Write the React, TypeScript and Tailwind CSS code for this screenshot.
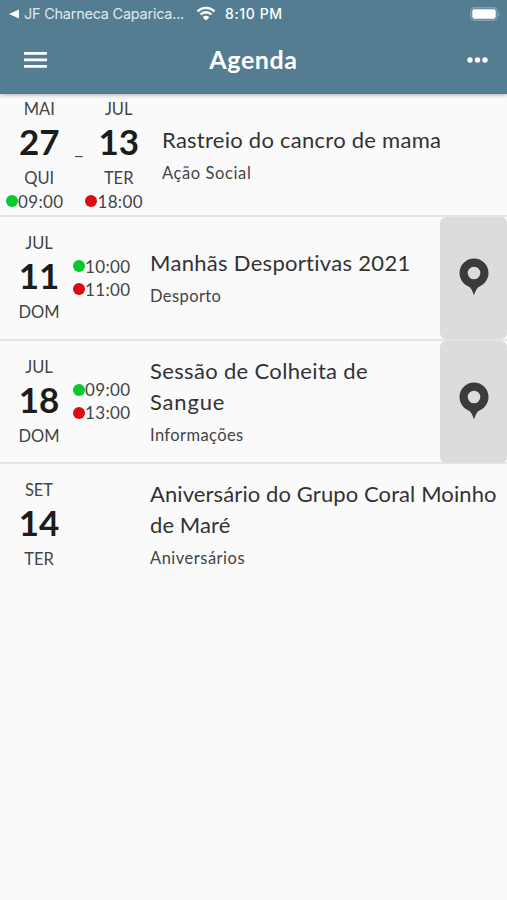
import React from 'react';
import clsx from 'clsx';

interface DateInfo {
  month: string;
  day: string;
  weekday: string;
  time?: string;
}

interface AgendaEvent {
  id: number;
  start: DateInfo;
  end?: DateInfo;
  hours?: { from: string; to: string };
  title: { text: string; tracking: string }[];
  category: string;
  categoryTracking: string;
  hasLocation?: boolean;
}

const events: AgendaEvent[] = [
  {
    id: 1,
    start: { month: 'MAI', day: '27', weekday: 'QUI', time: '09:00' },
    end: { month: 'JUL', day: '13', weekday: 'TER', time: '18:00' },
    title: [{ text: 'Rastreio do cancro de mama', tracking: 'tracking-[0.26px]' }],
    category: 'Ação Social',
    categoryTracking: 'tracking-[0.6px]',
  },
  {
    id: 2,
    start: { month: 'JUL', day: '11', weekday: 'DOM' },
    hours: { from: '10:00', to: '11:00' },
    title: [{ text: 'Manhãs Desportivas 2021', tracking: 'tracking-[0.3px]' }],
    category: 'Desporto',
    categoryTracking: 'tracking-[0.4px]',
    hasLocation: true,
  },
  {
    id: 3,
    start: { month: 'JUL', day: '18', weekday: 'DOM' },
    hours: { from: '09:00', to: '13:00' },
    title: [
      { text: 'Sessão de Colheita de', tracking: 'tracking-[0.34px]' },
      { text: 'Sangue', tracking: 'tracking-[0.8px]' },
    ],
    category: 'Informações',
    categoryTracking: 'tracking-[0.4px]',
    hasLocation: true,
  },
  {
    id: 4,
    start: { month: 'SET', day: '14', weekday: 'TER' },
    title: [
      { text: 'Aniversário do Grupo Coral Moinho', tracking: 'tracking-[0.1px]' },
      { text: 'de Maré', tracking: 'tracking-[0.1px]' },
    ],
    category: 'Aniversários',
    categoryTracking: 'tracking-[0.5px]',
  },
];

const Time: React.FC<{ value: string; color: 'green' | 'red' }> = ({ value, color }) => (
  <div className="flex h-[23px] items-center">
    <span className={clsx('h-3 w-3 rounded-full', color === 'green' ? 'bg-[#05c92f]' : 'bg-[#dc0a12]')} />
    <span className="text-[17px] leading-[23px] tracking-[0.35px]">{value}</span>
  </div>
);

const DateColumn: React.FC<{ date: DateInfo; color?: 'green' | 'red' }> = ({ date, color = 'green' }) => (
  <div className="flex shrink-0 flex-col items-center">
    {/* the time's dot hangs out to the left of the centred date */}
    <div className={clsx('flex flex-col items-center', date.time && 'pl-[9px]')}>
      <span className="text-[16.5px] leading-6">{date.month}</span>
      <span className="pb-[5px] text-[35px] font-bold leading-[40px] text-[#1c1c1c]">{date.day}</span>
      <span className="text-[16.5px] leading-6">{date.weekday}</span>
    </div>
    {date.time && <Time value={date.time} color={color} />}
  </div>
);

const PinIcon = () => (
  <svg width="30" height="38" viewBox="0 0 30 38" fill="#3b3b3b">
    <path
      fillRule="evenodd"
      d="M15 .5A14.5 14.5 0 0 0 .5 15c0 6 3.7 11.100 8.600 13.300 2.900 1.300 4.300 4.600 5.900 8.900 1.600-4.300 3-7.600 5.900-8.900 4.900-2.200 8.600-7.300 8.600-13.300A14.500 14.500 0 0 0 15 .5Zm0 8.200a6.300 6.300 0 1 1 0 12.600 6.300 6.300 0 0 1 0-12.600Z"
    />
  </svg>
);

const StatusBar = () => (
  <div className="flex h-[27px] items-center pl-[9px] pr-[6px] font-['Inter',sans-serif]">
    <div className="flex w-[187px] items-center">
      <svg width="11" height="10" viewBox="0 0 11 10" fill="#fff">
        <path d="M0 5 10 .5v9Z" />
      </svg>
      <span className="ml-[4px] whitespace-nowrap text-[14.5px] tracking-[-0.25px] text-[#dfe8ed]">
        JF Charneca Caparica...
      </span>
    </div>
    <svg width="20" height="15" viewBox="0 0 20 15" fill="none" stroke="#fff" strokeWidth="2.400">
      <path d="M1.500 5.300a12.200 12.200 0 0 1 17 0" />
      <path d="M4.600 8.500a7.700 7.700 0 0 1 10.800 0" />
      <path d="M10 14.500 6.700 11.200a4.700 4.700 0 0 1 6.600 0Z" fill="#fff" stroke="none" />
    </svg>
    <span className="ml-[9px] whitespace-nowrap text-[14px] font-medium tracking-[0.6px]">8:10 PM</span>
    <svg className="ml-auto" width="31" height="14" viewBox="0 0 31 14">
      <rect x=".7" y=".7" width="26.600" height="12.600" rx="4" fill="none" stroke="#86a2b2" strokeWidth="1.400" />
      <rect x="2.300" y="2.300" width="23.400" height="9.400" rx="2" fill="#fff" />
      <path d="M28.500 4.800c1.700.7 1.700 3.700 0 4.400Z" fill="#86a2b2" />
    </svg>
  </div>
);

const Header = () => (
  <header className="relative z-10 h-[94px] bg-[#557d92] text-white shadow-[0_1px_4px_rgba(0,0,0,0.3)]">
    <StatusBar />
    <div className="grid h-[66px] grid-cols-3 items-center px-6">
      <button aria-label="Menu" className="w-[23px]">
        <svg width="23" height="16" viewBox="0 0 23 16" fill="#fff">
          <path d="M0 0h23v2.700H0zM0 6.500h23v2.700H0zM0 13h23v2.700H0z" />
        </svg>
      </button>
      <h1 className="pb-px text-center text-[25px] font-bold tracking-[0.6px]">Agenda</h1>
      <button aria-label="Mais" className="-mr-[5px] justify-self-end">
        <svg width="21" height="6" viewBox="0 0 21 6" fill="#fff">
          <circle cx="3" cy="3" r="2.700" />
          <circle cx="10.500" cy="3" r="2.700" />
          <circle cx="18" cy="3" r="2.700" />
        </svg>
      </button>
    </div>
  </header>
);

const EventRow: React.FC<{ event: AgendaEvent; last: boolean }> = ({ event, last }) => (
  <li className={clsx('flex h-[123.330px] border-b-2', last ? 'border-transparent' : 'border-[#e4e4e4]')}>
    <div className="flex min-w-0 flex-1 items-center">
      {event.end ? (
        <div className="flex w-[162px] shrink-0 items-center pl-[6px]">
          <DateColumn date={event.start} />
          <span className="w-[22px] pb-[15px] pl-[11px] text-[19px]">_</span>
          <DateColumn date={event.end} color="red" />
        </div>
      ) : (
        <div className="flex w-[150px] shrink-0 items-center">
          <div className="flex w-[73px] justify-center pl-[5px]">
            <DateColumn date={event.start} />
          </div>
          {event.hours && (
            <div>
              <Time value={event.hours.from} color="green" />
              <Time value={event.hours.to} color="red" />
            </div>
          )}
        </div>
      )}
      <div>
        <div className="-mt-px pb-[6px]">
          {event.title.map((line) => (
            <p key={line.text} className={clsx('whitespace-nowrap text-[22px] leading-[31px] text-[#333]', line.tracking)}>
              {line.text}
            </p>
          ))}
        </div>
        <p className={clsx('text-[16.5px] leading-6', event.categoryTracking)}>{event.category}</p>
      </div>
    </div>
    {event.hasLocation && (
      <button
        aria-label="Ver no mapa"
        className="flex h-[122px] w-[67px] shrink-0 items-center justify-center rounded-md bg-[#dcdcdc] pb-[2px]"
      >
        <PinIcon />
      </button>
    )}
  </li>
);

const App: React.FC = () => {
  return (
    <div className="min-h-screen bg-[#fafafa] font-['Lato',sans-serif] text-[#444]">
      <Header />
      <ul>
        {events.map((event, index) => (
          <EventRow key={event.id} event={event} last={index === events.length - 1} />
        ))}
      </ul>
    </div>
  );
};

export default App;
